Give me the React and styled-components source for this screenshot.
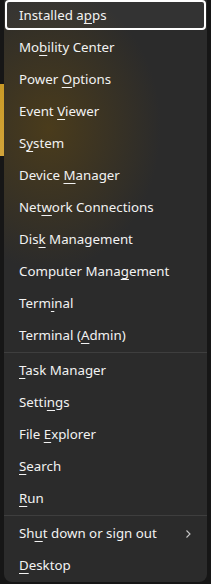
import React from 'react';
import styled, { createGlobalStyle } from 'styled-components';

const GlobalStyle = createGlobalStyle`
  html, body {
    margin: 0;
    padding: 0;
    height: 100%;
  }
  body {
    background:
      linear-gradient(to bottom, transparent 84px, #c99a26 84px, #d2a43a 156px, transparent 156px) no-repeat 0 0 / 4px 100%,
      #161616;
    font-family: "Noto Sans", "Open Sans", sans-serif;
    overflow: hidden;
  }
`;

const Page = styled.div`
  padding: 0 4px;
`;

const Menu = styled.div`
  width: 203px;
  box-sizing: border-box;
  display: flex;
  flex-direction: column;
  gap: 2px;
  padding: 0 1px 2px;
  border-radius: 0 0 8px 8px;
  background:
    radial-gradient(ellipse 150px 190px at 22% 22%, rgba(105, 76, 12, 0.5), transparent 75%),
    #2b2b2b;
`;

const Item = styled.div`
  height: 30px;
  box-sizing: border-box;
  display: flex;
  align-items: center;
  justify-content: space-between;
  padding: 2px 12px 0 12px;
  border: 2px solid ${p => (p.$focused ? '#ffffff' : 'transparent')};
  border-radius: 4px;
  background: ${p => (p.$focused ? 'rgba(255,255,255,0.04)' : 'transparent')};
  color: #f2f2f2;
  font-size: 13.3px;
  line-height: 1;
  white-space: nowrap;
`;

const Key = styled.u`
  text-decoration-thickness: 1px;
  text-underline-offset: 3px;
`;

const Separator = styled.div`
  height: 1px;
  margin: 0 -1px;
  background: #3e3e3e;
`;

const Chevron = () => (
  <svg width="8" height="10" viewBox="0 0 8 10" fill="none">
    <path d="M2.5 1.5 L6 5 L2.5 8.5" stroke="#c8c8c8" strokeWidth="1.1" />
  </svg>
);

const Label = ({ text, k, at }) => {
  const i = at != null ? at : text.indexOf(k);
  return (
    <span>
      {text.slice(0, i)}
      <Key>{k}</Key>
      {text.slice(i + k.length)}
    </span>
  );
};

const groups = [
  [
    { text: 'Installed apps', k: 'p', at: 11 },
    { text: 'Mobility Center', k: 'b' },
    { text: 'Power Options', k: 'O' },
    { text: 'Event Viewer', k: 'V' },
    { text: 'System', k: 'y' },
    { text: 'Device Manager', k: 'M' },
    { text: 'Network Connections', k: 'w' },
    { text: 'Disk Management', k: 'k' },
    { text: 'Computer Management', k: 'g' },
    { text: 'Terminal', k: 'i' },
    { text: 'Terminal (Admin)', k: 'A' },
  ],
  [
    { text: 'Task Manager', k: 'T' },
    { text: 'Settings', k: 'n' },
    { text: 'File Explorer', k: 'E' },
    { text: 'Search', k: 'S' },
    { text: 'Run', k: 'R' },
  ],
  [
    { text: 'Shut down or sign out', k: 'u', sub: true },
    { text: 'Desktop', k: 'D' },
  ],
];

export default function App() {
  return (
    <>
      <GlobalStyle />
      <Page>
        <Menu>
          {groups.map((g, gi) => (
            <React.Fragment key={gi}>
              {gi > 0 && <Separator />}
              {g.map((it, ii) => (
                <Item key={it.text} $focused={gi === 0 && ii === 0}>
                  <Label text={it.text} k={it.k} at={it.at} />
                  {it.sub && <Chevron />}
                </Item>
              ))}
            </React.Fragment>
          ))}
        </Menu>
      </Page>
    </>
  );
}
